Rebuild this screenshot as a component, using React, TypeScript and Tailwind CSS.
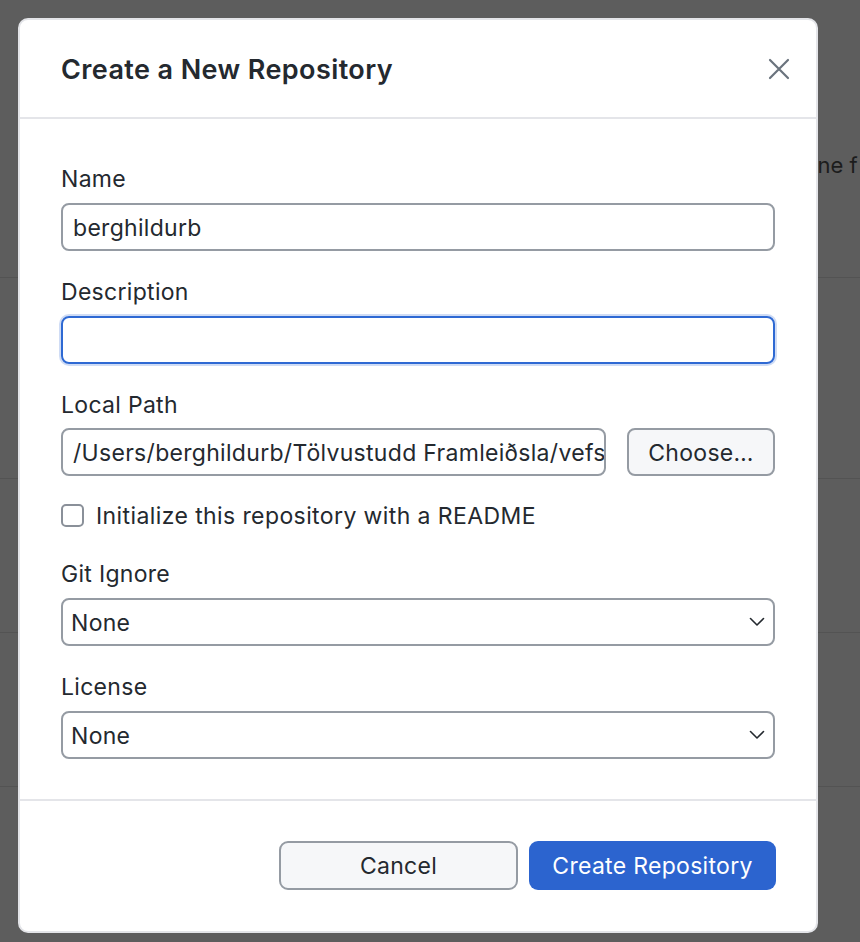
import React from 'react';

const Label: React.FC<{ children: React.ReactNode }> = ({ children }) => (
  <div className="h-[28px] text-[23px] leading-[30px] tracking-[0.3px] text-[#24292f]">{children}</div>
);

const Chevron: React.FC = () => (
  <svg width="16" height="10" viewBox="0 0 16 10" fill="none">
    <path d="M1.5 1.5 L8 8 L14.5 1.5" stroke="#24292f" strokeWidth="1.6" strokeLinecap="round" strokeLinejoin="round" />
  </svg>
);

const SelectBox: React.FC<{ value: string }> = ({ value }) => (
  <div className="flex h-[48px] items-center justify-between rounded-[8px] border-2 border-[#959ba3] pl-[8px] pr-[8px] text-[23px] tracking-[0.3px] text-[#24292f]">
    <span className="pt-[2px]">{value}</span>
    <Chevron />
  </div>
);

export default function App() {
  return (
    <div className="relative h-[942px] w-[860px] overflow-hidden bg-[#5d5d5d]" style={{ fontFamily: 'Inter, "Noto Sans", sans-serif' }}>
      {/* dimmed page behind the dialog */}
      <div className="flex flex-col">
        <div className="h-[278px] border-b border-[#535353] pl-[783px] pt-[151px] text-[22px] leading-[28px] whitespace-nowrap text-[#1c1c1c]">
          Clone f
        </div>
        <div className="h-[201px] border-b border-[#535353]" />
        <div className="h-[154px] border-b border-[#535353]" />
        <div className="h-[154px] border-b border-[#535353]" />
      </div>

      {/* dialog */}
      <div className="absolute left-[18px] top-[18px] flex h-[915px] w-[800px] flex-col rounded-[10px] border-2 border-[#e3e4e8] bg-white">
        <div className="flex h-[99px] items-center justify-between border-b-2 border-[#e4e5e9] pl-[41px] pr-[26px]">
          <h1 className="pt-[3px] text-[27px] font-semibold tracking-[0.4px] text-[#24292f]">Create a New Repository</h1>
          <svg width="22" height="22" viewBox="0 0 22 22" fill="none">
            <path d="M2 2 L20 20 M20 2 L2 20" stroke="#6a737d" strokeWidth="2.2" strokeLinecap="round" />
          </svg>
        </div>

        <div className="flex flex-col px-[41px] pt-[45px]">
          <Label>Name</Label>
          <div className="mt-[11px] flex h-[48px] items-center rounded-[8px] border-2 border-[#959ba3] px-[10px] pt-[2px] text-[23px] tracking-[0.3px] text-[#24292f]">
            berghildurb
          </div>

          <div className="mt-[26px]">
            <Label>Description</Label>
          </div>
          <div className="mt-[11px] h-[48px] rounded-[8px] border-2 border-[#2e69d3] ring-2 ring-[#cfdcf5]" />

          <div className="mt-[26px]">
            <Label>Local Path</Label>
          </div>
          <div className="mt-[10px] flex h-[48px] gap-[21px]">
            <div className="flex min-w-0 flex-1 items-center overflow-hidden whitespace-nowrap rounded-[8px] border-2 border-[#959ba3] px-[10px] pt-[2px] text-[23px] tracking-[0.3px] text-[#24292f]">
              /Users/berghildurb/Tölvustudd Framleiðsla/vefsi
            </div>
            <div className="flex w-[148px] items-center justify-center rounded-[8px] border-2 border-[#959ba3] bg-[#f6f7f9] pt-[2px] text-[23px] tracking-[0.3px] text-[#24292f]">
              Choose…
            </div>
          </div>

          <div className="mt-[27px] flex h-[24px] items-center gap-[12px]">
            <div className="h-[23px] w-[23px] rounded-[5px] border-2 border-[#8a9099] bg-white" />
            <span className="pt-[2px] text-[23px] tracking-[0.4px] text-[#24292f]">Initialize this repository with a README</span>
          </div>

          <div className="mt-[32px]">
            <Label>Git Ignore</Label>
          </div>
          <div className="mt-[11px]">
            <SelectBox value="None" />
          </div>

          <div className="mt-[26px]">
            <Label>License</Label>
          </div>
          <div className="mt-[11px]">
            <SelectBox value="None" />
          </div>
        </div>

        <div className="mt-[40px] border-t-2 border-[#e4e5e9]" />

        <div className="flex flex-1 items-center justify-end gap-[11px] px-[40px] pb-[2px]">
          <button className="h-[49px] w-[239px] rounded-[9px] border-2 border-[#959ba3] bg-[#f6f7f9] pt-[3px] text-[23px] tracking-[0.3px] text-[#24292f]">
            Cancel
          </button>
          <button className="h-[49px] w-[247px] rounded-[9px] bg-[#2c64cf] pt-[3px] text-[23px] tracking-[0.3px] text-white">
            Create Repository
          </button>
        </div>
      </div>
    </div>
  );
}
